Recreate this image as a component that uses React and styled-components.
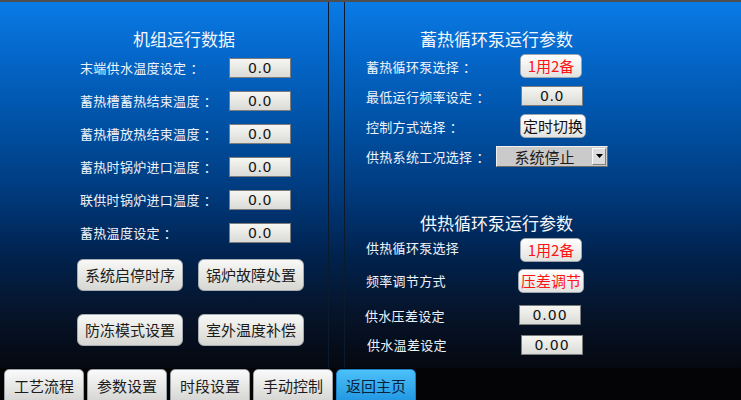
import React from "react";
import styled, { createGlobalStyle } from "styled-components";

const Global = createGlobalStyle`
  html, body {
    margin: 0;
    padding: 0;
    background: #000;
  }
  * {
    box-sizing: border-box;
  }
`;

const CJK = `"Noto Sans CJK SC", "Noto Sans", sans-serif`;

const leftRows = [
  "末端供水温度设定",
  "蓄热槽蓄热结束温度",
  "蓄热槽放热结束温度",
  "蓄热时锅炉进口温度",
  "联供时锅炉进口温度",
  "蓄热温度设定",
];

const leftButtons = ["系统启停时序", "锅炉故障处置", "防冻模式设置", "室外温度补偿"];

const navItems = [
  { label: "工艺流程" },
  { label: "参数设置" },
  { label: "时段设置" },
  { label: "手动控制" },
  { label: "返回主页", active: true },
];

const App = () => {
  return (
    <>
      <Global />
      <Screen>
        <Main>
          <LeftPanel>
            <Title offset={53}>机组运行数据</Title>
            {leftRows.map((label) => (
              <Row key={label} h={33}>
                <Label w={149}>
                  {label}
                  <Colon>：</Colon>
                </Label>
                <ValueBox>0.0</ValueBox>
              </Row>
            ))}
            <ButtonGrid>
              {leftButtons.map((b) => (
                <PanelButton key={b}>{b}</PanelButton>
              ))}
            </ButtonGrid>
          </LeftPanel>

          <RightPanel>
            <Title offset={54}>蓄热循环泵运行参数</Title>
            <Row h={30}>
              <Label w={154}>
                蓄热循环泵选择<Colon>：</Colon>
              </Label>
              <ToggleButton red>1用2备</ToggleButton>
            </Row>
            <Row h={30}>
              <Label w={155}>
                最低运行频率设定<Colon>：</Colon>
              </Label>
              <ValueBox>0.0</ValueBox>
            </Row>
            <Row h={30}>
              <Label w={154}>
                控制方式选择<Colon>：</Colon>
              </Label>
              <ToggleButton wide>定时切换</ToggleButton>
            </Row>
            <Row h={30}>
              <Label w={130}>
                供热系统工况选择<Colon>：</Colon>
              </Label>
              <Select>
                <SelectText>系统停止</SelectText>
                <SelectArrow>
                  <svg width="7" height="4" viewBox="0 0 7 4">
                    <path d="M0 0 L7 0 L3.5 4 Z" fill="#000" />
                  </svg>
                </SelectArrow>
              </Select>
            </Row>

            <Title offset={54} top={40}>供热循环泵运行参数</Title>
            <Row h={30} shift={-3}>
              <Label w={154}>供热循环泵选择</Label>
              <ToggleButton red nudge={5}>1用2备</ToggleButton>
            </Row>
            <Row h={37}>
              <Label w={152}>频率调节方式</Label>
              <ToggleButton red wide>压差调节</ToggleButton>
            </Row>
            <Row h={32}>
              <Label w={154} indent={-1}>供水压差设定</Label>
              <ValueBox wide>0.00</ValueBox>
            </Row>
            <Row h={27}>
              <Label w={154} indent={1}>供水温差设定</Label>
              <ValueBox wide>0.00</ValueBox>
            </Row>
          </RightPanel>
        </Main>

        <NavBar>
          {navItems.map((n) => (
            <NavButton key={n.label} active={n.active}>
              {n.label}
            </NavButton>
          ))}
        </NavBar>
      </Screen>
    </>
  );
};

export default App;

const Screen = styled.div`
  width: 741px;
  height: 400px;
  overflow: hidden;
  display: flex;
  flex-direction: column;
  border-top: 2px solid #4e4e50;
  font-family: ${CJK};
  background: linear-gradient(
    to bottom,
    #0a7be6 0%,
    #0466c8 14%,
    #0052a6 30%,
    #003a7c 48%,
    #002350 63%,
    #06142a 78%,
    #050a14 90%,
    #050507 100%
  );
`;

const Main = styled.div`
  height: 366px;
  display: flex;
`;

const LeftPanel = styled.div`
  width: 329px;
  padding: 25px 0 0 80px;
  border-right: 1px solid #0b1a2c;
  display: flex;
  flex-direction: column;
`;

const RightPanel = styled.div`
  flex: 1;
  margin-left: 15px;
  padding: 25px 0 0 21px;
  border-left: 1px solid #0b1a2c;
  display: flex;
  flex-direction: column;
`;

const Title = styled.div`
  margin-left: ${(p) => p.offset}px;
  margin-top: ${(p) => p.top || 0}px;
  height: 24px;
  line-height: 24px;
  font-size: 17px;
  color: #f4f7fb;
  white-space: nowrap;
`;

const Row = styled.div`
  height: ${(p) => p.h}px;
  display: flex;
  align-items: center;
  margin-top: ${(p) => p.shift || 0}px;
`;

const Label = styled.span`
  width: ${(p) => p.w}px;
  flex-shrink: 0;
  margin-left: ${(p) => p.indent || 0}px;
  font-size: 13px;
  color: #eef3fa;
  white-space: nowrap;
  letter-spacing: 0.3px;
`;

const Colon = styled.span`
  margin-left: 4px;
`;

const ValueBox = styled.div`
  width: 62px;
  height: 20px;
  border: 1px solid #7c7c7c;
  background: linear-gradient(to bottom, #f6f6f3, #dadad6);
  color: #141414;
  font-family: "DejaVu Sans", sans-serif;
  font-size: 14px;
  letter-spacing: ${(p) => (p.wide ? 1 : 0.5)}px;
  line-height: 18px;
  text-align: center;
`;

const ToggleButton = styled.div`
  height: 24px;
  padding: 0 ${(p) => (p.wide ? 2 : 6)}px;
  margin-top: ${(p) => p.nudge || 0}px;
  min-width: 62px;
  border: 1px solid #9da6b0;
  border-radius: 5px;
  background: linear-gradient(to bottom, #ffffff, #e2e2e0);
  color: ${(p) => (p.red ? "#ff1414" : "#111")};
  font-size: 15px;
  line-height: 22px;
  text-align: center;
  white-space: nowrap;
`;

const Select = styled.div`
  width: 112px;
  height: 21px;
  display: flex;
  align-items: center;
  background: #cacaca;
  border-top: 1px solid #f0f0f0;
  border-left: 1px solid #f0f0f0;
  border-right: 1px solid #6a6a6a;
  border-bottom: 1px solid #6a6a6a;
`;

const SelectText = styled.span`
  flex: 1;
  text-align: center;
  font-size: 15px;
  color: #1a1a1a;
  line-height: 19px;
`;

const SelectArrow = styled.span`
  width: 14px;
  height: 17px;
  margin-right: 1px;
  display: flex;
  align-items: center;
  justify-content: center;
  background: #dcdcdc;
  border-top: 1px solid #fafafa;
  border-left: 1px solid #fafafa;
  border-right: 1px solid #808080;
  border-bottom: 1px solid #808080;
`;

const ButtonGrid = styled.div`
  margin: 10px 0 0 -3px;
  display: grid;
  grid-template-columns: 106px 106px;
  column-gap: 15px;
  row-gap: 23px;
`;

const PanelButton = styled.div`
  height: 32px;
  border: 1px solid #a6acb4;
  border-radius: 6px;
  background: linear-gradient(to bottom, #f8f8f6, #d6d6d2);
  color: #1c1c1c;
  font-size: 15px;
  line-height: 30px;
  text-align: center;
  white-space: nowrap;
`;

const NavBar = styled.div`
  height: 32px;
  padding: 1px 0 0 4px;
  display: flex;
  gap: 3px;
  background: #040406;
`;

const NavButton = styled.div`
  width: 80px;
  height: 36px;
  flex-shrink: 0;
  border: 1px solid ${(p) => (p.active ? "#1a7fc4" : "#9aa0a8")};
  border-radius: 5px;
  background: ${(p) =>
    p.active
      ? "linear-gradient(to bottom, #4cc0f8, #1e94e2)"
      : "linear-gradient(to bottom, #fafafa, #d2d2d0)"};
  color: ${(p) => (p.active ? "#08223a" : "#1c1c1c")};
  font-size: 15px;
  line-height: 31px;
  text-align: center;
  white-space: nowrap;
`;
